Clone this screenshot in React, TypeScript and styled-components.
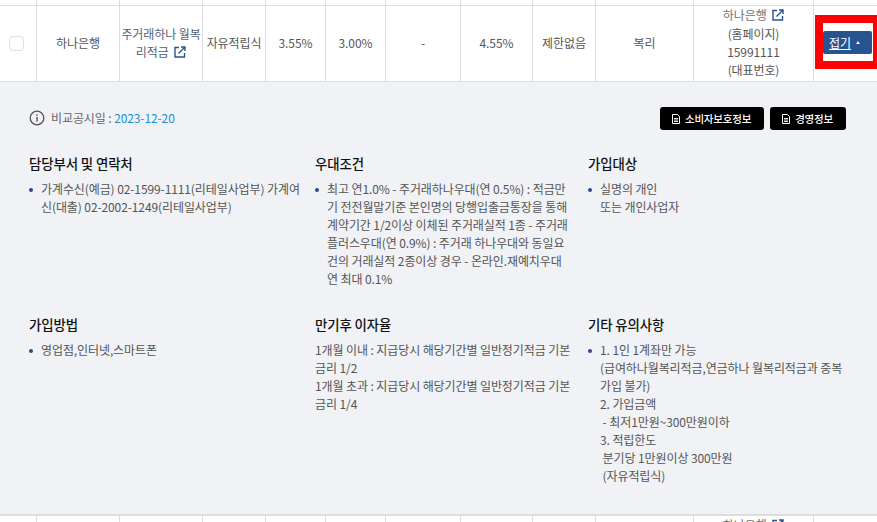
import React from 'react';
import styled, { createGlobalStyle } from 'styled-components';

const COLUMNS = '37px 83px 83px 63px 60px 60px 75px 72px 63px 98px 120px 64px';

const GlobalStyle = createGlobalStyle`
    html,
    body {
        margin: 0;
        padding: 0;
        background: #fff;
    }
    body {
        font-family: 'Noto Sans CJK KR', 'Noto Sans', sans-serif;
        font-size: 12px;
        letter-spacing: -0.1px;
        color: #555;
    }
`;

const Page = styled.div`
    width: 877px;
    height: 522px;
    overflow: hidden;
`;

const Row = styled.div<{ $height: number }>`
    display: grid;
    grid-template-columns: ${COLUMNS};
    height: ${({ $height }) => $height}px;
    overflow: hidden;
    box-sizing: border-box;
    border-bottom: 1px solid #ddd;
`;

const BottomEdge = styled(Row)`
    border-top: 2px solid #ddd;
    border-bottom: none;
`;

const Cell = styled.div`
    display: flex;
    flex-direction: column;
    align-items: center;
    justify-content: center;
    box-sizing: border-box;
    padding-bottom: 1px;
    border-right: 1px solid #ddd;
    line-height: 18px;
    text-align: center;
    color: #555;

    &:last-child {
        border-right: none;
    }
`;

const ClippedCell = styled(Cell)`
    justify-content: flex-start;
    padding-bottom: 0;
    color: #666;
`;

const ActionCell = styled(Cell)`
    border-right: none;
    padding-bottom: 0;
    align-items: flex-start;
`;

const Checkbox = styled.span`
    width: 13px;
    height: 13px;
    margin-right: 3px;
    border: 1px solid #e0e0e0;
    border-radius: 4px;
    background: #fff;
`;

const ProductLink = styled.span`
    color: #53627c;
    line-height: 18px;
`;

const LinkIcon = styled.svg`
    width: 12px;
    height: 12px;
    margin-left: 3px;
    vertical-align: -1px;
`;

const Contact = styled.div`
    line-height: 18.300px;
    color: #555;
`;

const BankName = styled.span`
    color: #6b7280;
`;

const Highlight = styled.div`
    border: 8px solid #f00;
    padding: 8px 0 7px;
    width: 50px;
    margin: 0 0 3px 1px;
    background: #fff;
`;

const FoldButton = styled.button`
    display: flex;
    align-items: center;
    gap: 5px;
    width: 49px;
    height: 23px;
    padding: 0 0 0 6px;
    border: none;
    border-radius: 2px;
    background: #27548f;
    color: #fff;
    font: inherit;
    text-decoration: underline;
`;

const Caret = styled.i`
    width: 0;
    height: 0;
    border-left: 2.500px solid transparent;
    border-right: 2.500px solid transparent;
    border-bottom: 3px solid #fff;
`;

const Detail = styled.section`
    box-sizing: border-box;
    height: 432px;
    padding: 25px 31px 0 29px;
    background: #f0f2f6;
`;

const DetailTop = styled.div`
    display: flex;
    align-items: center;
    justify-content: space-between;
    height: 23px;
    margin-bottom: 23px;
`;

const Disclosure = styled.div`
    display: flex;
    align-items: center;
    gap: 6px;
    padding-bottom: 2px;
    color: #666;
`;

const DateText = styled.span`
    color: #1e90d2;
`;

const DocButtons = styled.div`
    display: flex;
    gap: 6px;
`;

const DocButton = styled.button`
    display: flex;
    align-items: center;
    gap: 5px;
    height: 23px;
    padding: 0 13px 0 12px;
    border: none;
    border-radius: 3px;
    background: #000;
    color: #fff;
    font: inherit;
    font-size: 10.500px;
    font-weight: 500;
    letter-spacing: -0.200px;
`;

const InfoGrid = styled.div`
    display: grid;
    grid-template-columns: 272px 259px 258px;
    grid-template-rows: 161px 1fr;
    column-gap: 14px;
`;

const Block = styled.div``;

const BlockTitle = styled.h4`
    margin: 0 0 7px;
    font-size: 13.400px;
    font-weight: 500;
    line-height: 20px;
    color: #111;
`;

const BulletList = styled.ul`
    margin: 0;
    padding: 0 0 0 12px;
    list-style: none;
`;

const Bullet = styled.li`
    position: relative;
    line-height: 18px;
    color: #555;
    white-space: pre-wrap;

    &::before {
        content: '';
        position: absolute;
        left: -12px;
        top: 8px;
        width: 4px;
        height: 4px;
        border-radius: 50%;
        background: #2b4a8f;
    }
`;

const Plain = styled.div`
    line-height: 18px;
    color: #555;
    white-space: pre-wrap;
`;

const External = () => (
    <LinkIcon viewBox="0 0 12 12" fill="none" stroke="#27548f">
        <path d="M5 1.500H1v9.500h9.500V7" strokeWidth="1.400" />
        <path d="M4.500 7.500 10.500 1.500M7 1h4v4" strokeWidth="1.400" />
    </LinkIcon>
);

const InfoIcon = () => (
    <svg width="16" height="16" viewBox="0 0 16 16" fill="none">
        <circle cx="8" cy="8" r="6.800" stroke="#555" strokeWidth="1.300" />
        <rect x="7.300" y="7" width="1.400" height="4.500" fill="#555" />
        <rect x="7.300" y="4.300" width="1.400" height="1.500" fill="#555" />
    </svg>
);

const DocIcon = () => (
    <svg width="8" height="10" viewBox="0 0 8 10">
        <path d="M0.500 0.500H5.500L7.500 2.500V9.500H0.500Z" fill="none" stroke="#fff" />
        <path d="M2 4.500H6M2 6H6M2 7.500H6" stroke="#fff" strokeWidth="0.900" />
    </svg>
);

const cells = ['3.55%', '3.00%', '-', '4.55%', '제한없음'];

const App = () => (
    <Page>
        <GlobalStyle />
        <Row $height={6}>
            {Array.from({ length: 12 }, (_, i) => (
                <Cell key={i} />
            ))}
        </Row>
        <Row $height={76}>
            <Cell>
                <Checkbox />
            </Cell>
            <Cell>하나은행</Cell>
            <Cell>
                <ProductLink>
                    주거래하나 월복
                    <br />
                    리적금 <External />
                </ProductLink>
            </Cell>
            <Cell>자유적립식</Cell>
            {cells.map(text => (
                <Cell key={text}>{text}</Cell>
            ))}
            <Cell>복리</Cell>
            <Cell>
                <Contact>
                    <BankName>
                        하나은행 <External />
                    </BankName>
                    <br />
                    (홈페이지)
                    <br />
                    15991111
                    <br />
                    (대표번호)
                </Contact>
            </Cell>
            <ActionCell>
                <Highlight>
                    <FoldButton>
                        접기 <Caret />
                    </FoldButton>
                </Highlight>
            </ActionCell>
        </Row>
        <Detail>
            <DetailTop>
                <Disclosure>
                    <InfoIcon />
                    <span>
                        비교공시일 : <DateText>2023-12-20</DateText>
                    </span>
                </Disclosure>
                <DocButtons>
                    <DocButton>
                        <DocIcon />
                        소비자보호정보
                    </DocButton>
                    <DocButton>
                        <DocIcon />
                        경영정보
                    </DocButton>
                </DocButtons>
            </DetailTop>
            <InfoGrid>
                <Block>
                    <BlockTitle>담당부서 및 연락처</BlockTitle>
                    <BulletList>
                        <Bullet>가계수신(예금) 02-1599-1111(리테일사업부) 가계여신(대출) 02-2002-1249(리테일사업부)</Bullet>
                    </BulletList>
                </Block>
                <Block>
                    <BlockTitle>우대조건</BlockTitle>
                    <BulletList>
                        <Bullet>
                            최고 연1.0% - 주거래하나우대(연 0.5%) : 적금만기 전전월말기준 본인명의 당행입출금통장을 통해 계약기간 1/2이상 이체된 주거래실적 1종 - 주거래플러스우대(연 0.9%) : 주거래 하나우대와 동일요건의 거래실적 2종이상 경우 - 온라인.재예치우대 연 최대 0.1%
                        </Bullet>
                    </BulletList>
                </Block>
                <Block>
                    <BlockTitle>가입대상</BlockTitle>
                    <BulletList>
                        <Bullet>{'실명의 개인\n또는 개인사업자'}</Bullet>
                    </BulletList>
                </Block>
                <Block>
                    <BlockTitle>가입방법</BlockTitle>
                    <BulletList>
                        <Bullet>영업점,인터넷,스마트폰</Bullet>
                    </BulletList>
                </Block>
                <Block>
                    <BlockTitle>만기후 이자율</BlockTitle>
                    <Plain>
                        {'1개월 이내 : 지급당시 해당기간별 일반정기적금 기본금리 1/2\n1개월 초과 : 지급당시 해당기간별 일반정기적금 기본금리 1/4'}
                    </Plain>
                </Block>
                <Block>
                    <BlockTitle>기타 유의사항</BlockTitle>
                    <BulletList>
                        <Bullet>
                            {'1. 1인 1계좌만 가능\n(급여하나월복리적금,연금하나 월복리적금과 중복가입 불가)\n2. 가입금액\n - 최저1만원~300만원이하\n3. 적립한도\n 분기당 1만원이상 300만원\n (자유적립식)'}
                        </Bullet>
                    </BulletList>
                </Block>
            </InfoGrid>
        </Detail>
        <BottomEdge $height={8}>
            {Array.from({ length: 12 }, (_, i) =>
                i === 10 ? (
                    <ClippedCell key={i}>
                        <span>
                            하나은행 <External />
                        </span>
                    </ClippedCell>
                ) : (
                    <Cell key={i} />
                ),
            )}
        </BottomEdge>
    </Page>
);

export default App;
